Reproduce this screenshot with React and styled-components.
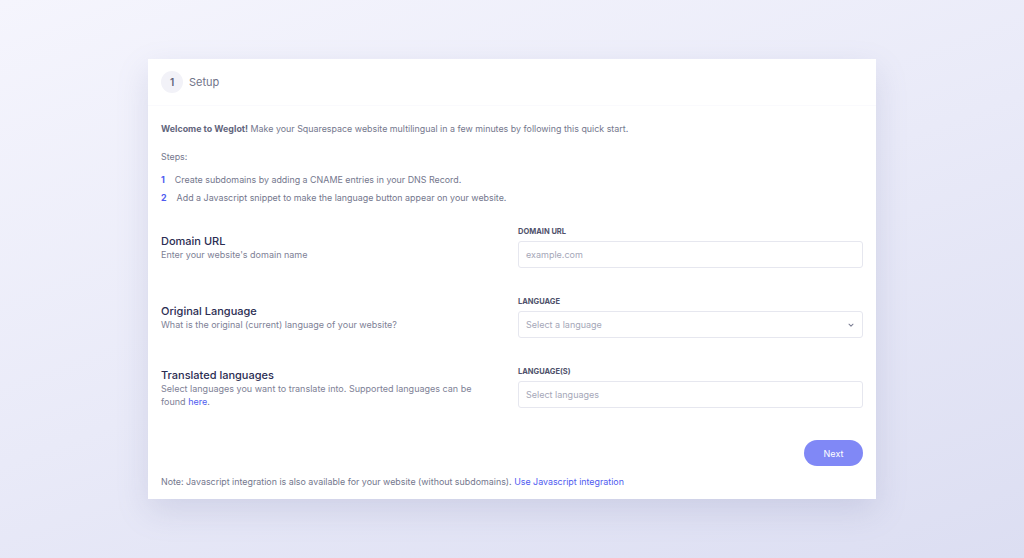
import styled, { createGlobalStyle } from 'styled-components';

const GlobalStyle = createGlobalStyle`
  * { box-sizing: border-box; }
  body {
    margin: 0;
    font-family: Inter, "Noto Sans", sans-serif;
    background: linear-gradient(160deg, #f5f5fd 0%, #e9eaf8 50%, #dcdef2 100%);
    min-height: 100vh;
  }
`;

const Page = styled.main`
  min-height: 100vh;
  display: flex;
  align-items: center;
  justify-content: center;
`;

const Card = styled.section`
  width: 728px;
  height: 440px;
  background: #fff;
  box-shadow: 0 12px 30px rgba(120, 124, 170, 0.2);
  display: flex;
  flex-direction: column;
`;

const Header = styled.header`
  display: flex;
  align-items: center;
  gap: 6px;
  padding: 12px 13px;
  border-bottom: 1px solid #fafafd;
`;

const StepBadge = styled.span`
  width: 22px;
  height: 22px;
  border-radius: 50%;
  background: #f2f2f8;
  color: #5f6279;
  font-size: 10px;
  font-weight: 600;
  display: flex;
  align-items: center;
  justify-content: center;
`;

const HeaderTitle = styled.h1`
  margin: 0;
  font-size: 11px;
  font-weight: 400;
  color: #717489;
`;

const Body = styled.div`
  padding: 15px 13px 9px;
  display: flex;
  flex-direction: column;
  flex: 1;
`;

const Text = styled.p`
  margin: ${({ $mt }) => $mt || 0}px 0 0;
  font-size: 8.9px;
  line-height: 16px;
  color: #74778d;

  strong {
    font-weight: 700;
    color: #62657c;
  }
`;

const Steps = styled.ol`
  list-style: none;
  margin: 7px 0 0;
  padding: 0;
  display: flex;
  flex-direction: column;
  gap: 2px;
`;

const Step = styled.li`
  display: flex;
  gap: 10px;
  font-size: 8.9px;
  line-height: 16px;
  color: #74778d;
`;

const StepNum = styled.span`
  color: #4f5bf0;
  font-weight: 700;
`;

const Form = styled.div`
  margin-top: 21px;
  display: flex;
  flex-direction: column;
  gap: 29px;
`;

const Row = styled.div`
  display: grid;
  grid-template-columns: 1fr 345px;
  gap: 24px;
  align-items: center;
`;

const RowInfo = styled.div`
  display: flex;
  flex-direction: column;
`;

const RowTitle = styled.h2`
  margin: 0;
  font-size: 11px;
  line-height: 14px;
  font-weight: 500;
  color: #2b2d52;
`;

const RowDesc = styled.p`
  margin: 0;
  font-size: 9px;
  line-height: 13px;
  color: #7e8196;
  max-width: 320px;
`;

const Link = styled.a`
  color: #4f5bf0;
  text-decoration: none;
`;

const Field = styled.div`
  display: flex;
  flex-direction: column;
  gap: 4px;
`;

const FieldLabel = styled.label`
  font-size: 7.5px;
  line-height: 10px;
  font-weight: 700;
  color: #4f526b;
  text-transform: uppercase;
`;

const Control = styled.div`
  height: 27px;
  border: 1px solid #e6e7ef;
  border-radius: 3px;
  padding: 0 7px;
  display: flex;
  align-items: center;
  justify-content: space-between;
  font-size: 9px;
  color: #a5a7b8;
`;

const Chevron = () => (
  <svg width="8" height="8" viewBox="0 0 10 10" fill="none">
    <path d="M2.5 4l2.5 2.5L7.5 4" stroke="#7b7e93" strokeWidth="1.3" strokeLinecap="round" strokeLinejoin="round" />
  </svg>
);

const Actions = styled.div`
  display: flex;
  justify-content: flex-end;
  margin-top: 32px;
`;

const NextButton = styled.button`
  width: 59px;
  height: 26px;
  border: none;
  border-radius: 13px;
  background: #8088f6;
  color: #fff;
  font-family: inherit;
  font-size: 9px;
  cursor: pointer;
`;

const rows = [
  {
    title: 'Domain URL',
    desc: "Enter your website's domain name",
    label: 'Domain URL',
    placeholder: 'example.com',
  },
  {
    title: 'Original Language',
    desc: 'What is the original (current) language of your website?',
    label: 'Language',
    placeholder: 'Select a language',
    select: true,
  },
  {
    title: 'Translated languages',
    desc: (
      <>
        Select languages you want to translate into. Supported languages can be found <Link href="#">here</Link>.
      </>
    ),
    label: 'Language(s)',
    placeholder: 'Select languages',
  },
];

export default function App() {
  return (
    <>
      <GlobalStyle />
      <Page>
        <Card>
          <Header>
            <StepBadge>1</StepBadge>
            <HeaderTitle>Setup</HeaderTitle>
          </Header>
          <Body>
            <Text>
              <strong>Welcome to Weglot!</strong> Make your Squarespace website multilingual in a few minutes by following this quick start.
            </Text>
            <Text $mt={12}>Steps:</Text>
            <Steps>
              <Step><StepNum>1</StepNum>Create subdomains by adding a CNAME entries in your DNS Record.</Step>
              <Step><StepNum>2</StepNum>Add a Javascript snippet to make the language button appear on your website.</Step>
            </Steps>
            <Form>
              {rows.map((r) => (
                <Row key={r.title}>
                  <RowInfo>
                    <RowTitle>{r.title}</RowTitle>
                    <RowDesc>{r.desc}</RowDesc>
                  </RowInfo>
                  <Field>
                    <FieldLabel>{r.label}</FieldLabel>
                    <Control>
                      {r.placeholder}
                      {r.select && <Chevron />}
                    </Control>
                  </Field>
                </Row>
              ))}
            </Form>
            <Actions>
              <NextButton>Next</NextButton>
            </Actions>
            <Text $mt={8}>
              Note: Javascript integration is also available for your website (without subdomains). <Link href="#">Use Javascript integration</Link>
            </Text>
          </Body>
        </Card>
      </Page>
    </>
  );
}
